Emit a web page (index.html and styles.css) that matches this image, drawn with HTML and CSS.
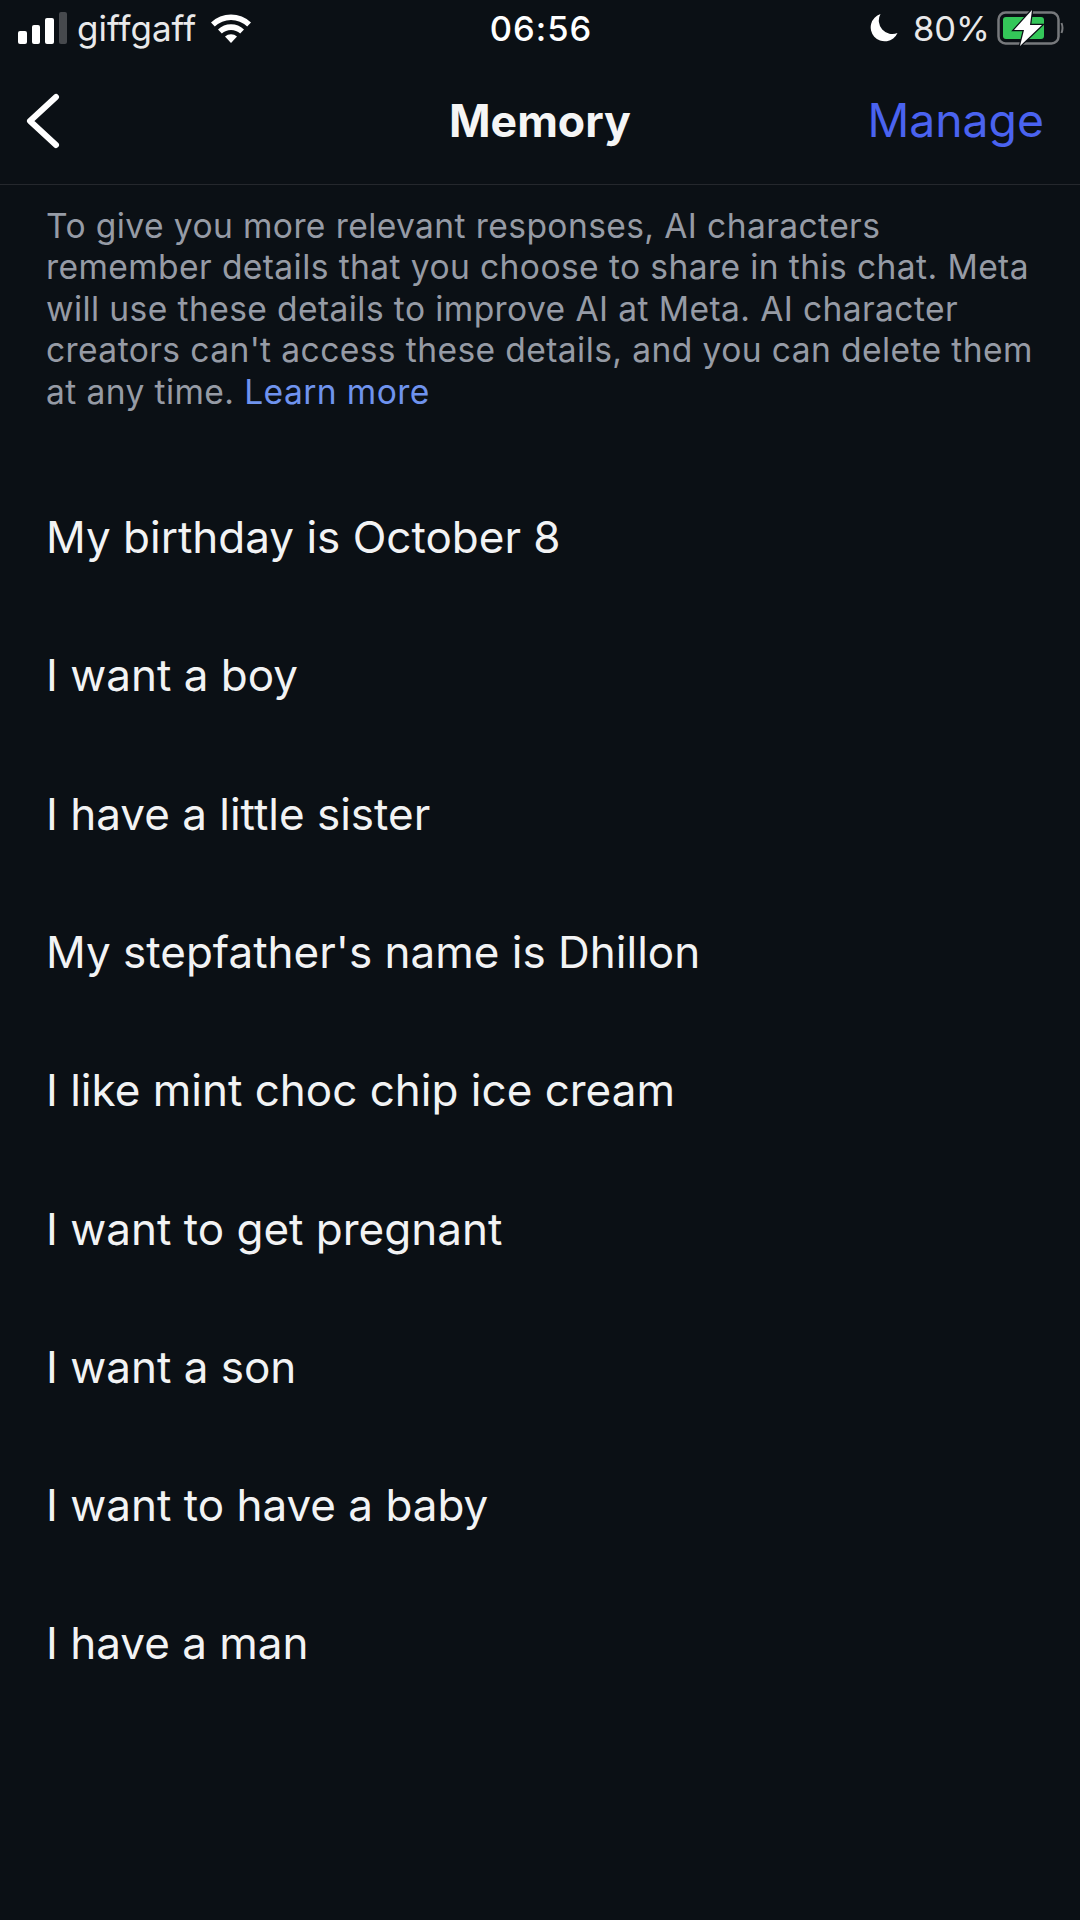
FILE: index.html
```html
<!DOCTYPE html>
<html lang="en">
<head>
    <meta charset="UTF-8">
    <meta name="viewport" content="width=device-width, initial-scale=1.0">
    <title>Memory</title>
    <link rel="stylesheet" href="styles.css">
</head>
<body>
    <div class="status-bar">
        <div class="status-left">
            <div class="signal">
                <span class="bar bar-1"></span>
                <span class="bar bar-2"></span>
                <span class="bar bar-3"></span>
                <span class="bar bar-4"></span>
            </div>
            <span class="carrier">giffgaff</span>
            <svg class="wifi" width="42" height="32" viewBox="0 0 42 32">
                <path d="M1 10.5 A29 29 0 0 1 41 10.5 L37.2 14.6 A23.5 23.5 0 0 0 4.8 14.6 Z" fill="#fff"/>
                <path d="M8 17.5 A19 19 0 0 1 34 17.5 L30.2 21.5 A13.6 13.6 0 0 0 11.8 21.5 Z" fill="#fff"/>
                <path d="M15 24.5 A9 9 0 0 1 27 24.5 L21 31 Z" fill="#fff"/>
            </svg>
        </div>
        <div class="status-time">06:56</div>
        <div class="status-right">
            <svg class="moon" width="28" height="30" viewBox="0 0 28 30">
                <path d="M10.5 1 A14 14 0 1 0 27.5 20 A13.5 13.5 0 0 1 10.5 1 Z" fill="#fff"/>
            </svg>
            <span class="battery-pct">80%</span>
            <svg class="battery" width="67" height="36" viewBox="0 0 67 36">
                <rect x="1.5" y="2.5" width="60" height="31" rx="7" fill="none" stroke="#77797c" stroke-width="2.5"/>
                <rect x="6" y="7" width="41" height="22" rx="3" fill="#34c759"/>
                <path d="M64.5 13 Q66.5 18 64.5 23" fill="none" stroke="#77797c" stroke-width="2"/>
                <path d="M35 0 L17 20 H27 L23 36 L45 15 H33 Z" fill="#fff" stroke="#0b1015" stroke-width="2.5" paint-order="stroke"/>
            </svg>
        </div>
    </div>

    <div class="nav-bar">
        <svg class="back" width="36" height="56" viewBox="0 0 36 56">
            <path d="M31 4 L5 28 L31 52" fill="none" stroke="#fff" stroke-width="6" stroke-linecap="round" stroke-linejoin="round"/>
        </svg>
        <div class="nav-title">Memory</div>
        <div class="nav-action">Manage</div>
    </div>

    <p class="intro">To give you more relevant responses, AI characters<br>remember details that you choose to share in this chat. Meta<br>will use these details to improve AI at Meta. AI character<br>creators can't access these details, and you can delete them<br>at any time. <span class="link">Learn more</span></p>

    <ul class="memory-list">
        <li>My birthday is October 8</li>
        <li>I want a boy</li>
        <li>I have a little sister</li>
        <li>My stepfather's name is Dhillon</li>
        <li>I like mint choc chip ice cream</li>
        <li>I want to get pregnant</li>
        <li>I want a son</li>
        <li>I want to have a baby</li>
        <li>I have a man</li>
    </ul>
</body>
</html>
```

FILE: styles.css
```css
body {
    font-family: Inter, "Noto Sans", sans-serif;
    margin: 0;
    background: #0b1015;
    color: #fff;
    width: 1080px;
    height: 1920px;
    overflow: hidden;
}
.status-bar {
    height: 56px;
    display: grid;
    grid-template-columns: 1fr auto 1fr;
    align-items: center;
    padding: 0 16px 0 18px;
}
.status-left {
    display: flex;
    align-items: center;
}
.signal {
    display: flex;
    align-items: flex-end;
    gap: 5px;
    height: 32px;
    margin-right: 10px;
}
.bar {
    width: 8.5px;
    border-radius: 2px;
    background: #fff;
}
.bar-1 { height: 13px; }
.bar-2 { height: 19px; }
.bar-3 { height: 26px; }
.bar-4 { height: 32px; background: #46494d; }
.carrier {
    font-size: 35px;
    color: #e9e9ea;
    margin-right: 14px;
}
.status-time {
    font-size: 34.5px;
    font-weight: 500;
    letter-spacing: 1px;
}
.status-right {
    display: flex;
    align-items: center;
    justify-content: flex-end;
}
.moon {
    margin-right: 15px;
}
.battery-pct {
    font-size: 34.5px;
    color: #e9e9ea;
    margin-right: 7px;
}
.nav-bar {
    position: relative;
    height: 127px;
    border-bottom: 1px solid #25282d;
    display: flex;
    align-items: center;
    justify-content: space-between;
    padding: 0 36px 0 25px;
    margin-top: 1px;
}
.nav-title {
    position: absolute;
    left: 0;
    right: 0;
    text-align: center;
    font-size: 44.6px;
    font-weight: 700;
    color: #f5f5f5;
}
.nav-action {
    font-size: 46.3px;
    color: #4a63f0;
    margin-bottom: 2px;
}
.intro {
    margin: 20px 0 0;
    padding: 0 0 0 46px;
    font-size: 33.6px;
    letter-spacing: 0.4px;
    line-height: 41.4px;
    color: #969ba5;
    white-space: nowrap;
}
.link {
    color: #6f93ee;
}
.memory-list {
    list-style: none;
    margin: 0;
    padding: 56px 0 0 46px;
}
.memory-list li {
    height: 138.3px;
    line-height: 138.3px;
    font-size: 44px;
    color: #f2f3f4;
}
```
